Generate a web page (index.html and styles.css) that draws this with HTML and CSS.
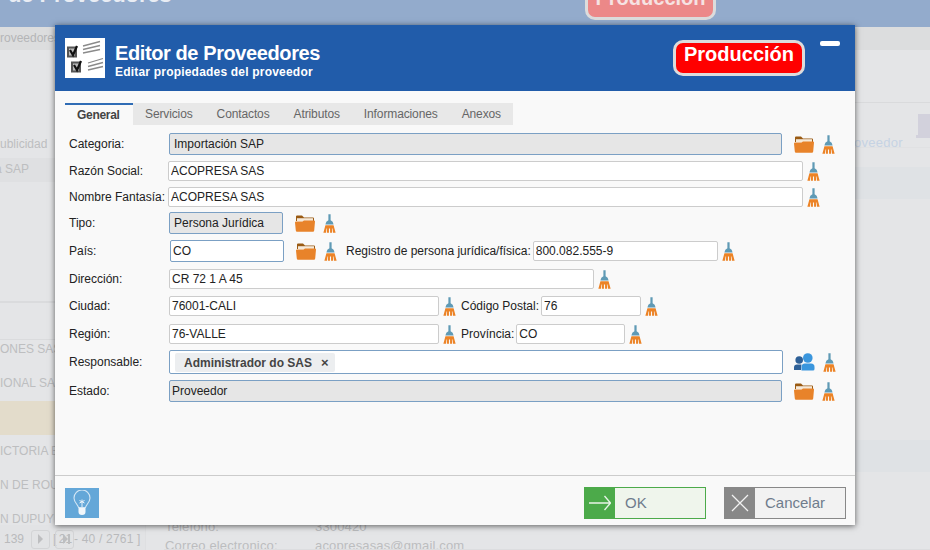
FILE: index.html
```html
<!DOCTYPE html>
<html lang="en">

<head>
    <meta charset="UTF-8">
    <meta name="viewport" content="width=device-width, initial-scale=1.0">
    <title>Editor de Proveedores</title>
    <link rel="stylesheet" href="styles.css">
</head>

<body>
    <svg class="defs" width="0" height="0">
        <symbol id="folder" viewBox="0 0 20 17">
            <path fill="#9a5a12" d="M1 6V1.5Q1 .5 2 .5H7L9 2.5H18Q19 2.5 19 3.500V6H18V3.500H2V6Z" />
            <path fill="#f6e9d8" d="M2 3.500H18V6H2Z" />
            <path fill="#e8832a" d="M0 7.500Q0 6.500 1 6.500H7.500L9 5.500H19Q20 5.500 20 6.500L19.200 15.500Q19 16.800 18 16.800H2Q1 16.800 .8 15.500Z" />
        </symbol>
        <symbol id="broom" viewBox="0 0 14 20">
            <path fill="#5f9ab5" d="M5.800 0H8.200V6.500Q11 7.500 11.400 11H2.600Q3 7.500 5.800 6.500Z" />
            <path fill="#ec8326" d="M2.600 11.800H11.400L13.600 20H10.800L10.200 15.500H9.600L9.800 20H7.600V15.500H6.400V20H4.200L4.400 15.500H3.800L3.200 20H.4Z" />
        </symbol>
        <symbol id="people" viewBox="0 0 21 18">
            <circle cx="5.200" cy="7" r="3.800" fill="#2e6097" />
            <path fill="#2e6097" d="M0 17V14.500Q0 11.500 3 11.500H7.500Q7 14 7 17Z" />
            <circle cx="13.800" cy="5" r="4.800" fill="#3a96dd" />
            <path fill="#3a96dd" d="M7.500 17.500V14Q7.500 10.500 11 10.500H17Q20.500 10.500 20.500 14V16Q20.500 17.500 19 17.500Z" />
        </symbol>
    </svg>

    <div class="backdrop">
        <div class="topbar">
            <div class="top-title">de Proveedores</div>
            <div class="top-badge">Producción</div>
        </div>
        <div class="crumb">roveedores</div>
        <div class="main">
            <div class="side">
                <div class="side-top">
                    <div class="side-row">ublicidad</div>
                    <div class="side-row side-sel">a SAP</div>
                </div>
                <div class="side-head"></div>
                <div class="side-list">
                    <div class="list-row list-first">ONES SAS</div>
                    <div class="list-row">IONAL SA</div>
                    <div class="list-row list-tan"></div>
                    <div class="list-row">ICTORIA E</div>
                    <div class="list-row">N DE ROU</div>
                    <div class="list-row">N DUPUY</div>
                </div>
                <div class="pager">
                    <span class="pager-num">139</span>
                    <span class="pager-btn"><i class="tri"></i></span>
                    <span class="pager-bracket">[</span>
                    <span class="pager-btn pager-last">21<i class="tri tri-over"></i><i class="tri-bar"></i></span>
                    <span class="pager-range">- 40 / 2761 ]</span>
                </div>
            </div>
            <div class="detail">
                <div class="detail-head"></div>
                <div class="detail-tools">
                    <span class="tool-text">Proveedor</span>
                    <div class="laptop"><div class="laptop-screen"></div><div class="laptop-base"></div></div>
                </div>
                <div class="band band-one"></div>
                <div class="band band-two"></div>
                <div class="contact">
                    <div class="contact-row"><span>Teléfono:</span><span>3300420</span></div>
                    <div class="contact-row"><span>Correo electronico:</span><span>acopresasas@gmail.com</span></div>
                </div>
                <div class="detail-strip"></div>
            </div>
        </div>
    </div>

    <div class="modal">
        <div class="modal-header">
            <svg class="logo" width="40" height="40" viewBox="0 0 40 40">
                <rect width="40" height="40" fill="#fff" />
                <g class="logo-art">
                    <rect x="3" y="9.500" width="8" height="9" fill="#bbb" stroke="#555" stroke-width="2" />
                    <path d="M5 12l3 5 4-9" fill="none" stroke="#111" stroke-width="2.200" />
                    <rect x="7" y="24.500" width="8" height="9" fill="#bbb" stroke="#555" stroke-width="2" />
                    <path d="M9 27l3 5 4-9" fill="none" stroke="#111" stroke-width="2.200" />
                    <path d="M18 8L35 3.500M18 11.500L35 7.500M18 15L35 11.500M23 25L38 20.500M23 28.500L38 24.500M23 32L38 28.500" stroke="#8a8a8a" stroke-width="1.300" />
                </g>
            </svg>
            <div class="modal-titles">
                <div class="modal-title">Editor de Proveedores</div>
                <div class="modal-subtitle">Editar propiedades del proveedor</div>
            </div>
            <div class="badge">Producción</div>
            <div class="minimize"></div>
        </div>

        <div class="modal-body">
            <div class="tabs">
                <div class="tab tab-active">General</div>
                <div class="tab">Servicios</div>
                <div class="tab">Contactos</div>
                <div class="tab">Atributos</div>
                <div class="tab">Informaciones</div>
                <div class="tab">Anexos</div>
            </div>

            <div class="form">
                <div class="row">
                    <label class="lbl">Categoria:</label>
                    <input class="inp select w-cat pad-5" value="Importación SAP" readonly>
                    <svg class="ico-folder after-select"><use href="#folder" /></svg>
                    <svg class="ico-broom"><use href="#broom" /></svg>
                </div>
                <div class="row">
                    <label class="lbl">Razón Social:</label>
                    <input class="inp shift-left w-name" value="ACOPRESA SAS">
                    <svg class="ico-broom near"><use href="#broom" /></svg>
                </div>
                <div class="row row-tight">
                    <label class="lbl">Nombre Fantasía:</label>
                    <input class="inp shift-left w-name" value="ACOPRESA SAS">
                    <svg class="ico-broom near"><use href="#broom" /></svg>
                </div>
                <div class="row">
                    <label class="lbl">Tipo:</label>
                    <input class="inp select w-tipo pad-5" value="Persona Jurídica" readonly>
                    <svg class="ico-folder after-select"><use href="#folder" /></svg>
                    <svg class="ico-broom"><use href="#broom" /></svg>
                </div>
                <div class="row row-wide">
                    <label class="lbl">País:</label>
                    <input class="inp open shift-right w-tipo" value="CO">
                    <svg class="ico-folder after-select"><use href="#folder" /></svg>
                    <svg class="ico-broom"><use href="#broom" /></svg>
                    <label class="lbl-inline lbl-reg">Registro de persona jurídica/física:</label>
                    <input class="inp short w-reg" value="800.082.555-9">
                    <svg class="ico-broom near"><use href="#broom" /></svg>
                </div>
                <div class="row row-wide">
                    <label class="lbl">Dirección:</label>
                    <input class="inp w-dir" value="CR 72 1 A 45">
                    <svg class="ico-broom near"><use href="#broom" /></svg>
                </div>
                <div class="row row-loose">
                    <label class="lbl">Ciudad:</label>
                    <input class="inp w-city" value="76001-CALI">
                    <svg class="ico-broom near"><use href="#broom" /></svg>
                    <label class="lbl-inline lbl-side">Código Postal:</label>
                    <input class="inp w-zip" value="76">
                    <svg class="ico-broom near"><use href="#broom" /></svg>
                </div>
                <div class="row">
                    <label class="lbl">Región:</label>
                    <input class="inp w-city" value="76-VALLE">
                    <svg class="ico-broom near"><use href="#broom" /></svg>
                    <label class="lbl-inline lbl-side">Província:</label>
                    <input class="inp w-prov" value="CO">
                    <svg class="ico-broom near"><use href="#broom" /></svg>
                </div>
                <div class="row">
                    <label class="lbl">Responsable:</label>
                    <div class="multi w-multi">
                        <span class="chip">Administrador do SAS<span class="chip-x">×</span></span>
                    </div>
                    <svg class="ico-people"><use href="#people" /></svg>
                    <svg class="ico-broom"><use href="#broom" /></svg>
                </div>
                <div class="row">
                    <label class="lbl">Estado:</label>
                    <input class="inp select w-cat" value="Proveedor" readonly>
                    <svg class="ico-folder after-select"><use href="#folder" /></svg>
                    <svg class="ico-broom"><use href="#broom" /></svg>
                </div>
            </div>
        </div>

        <div class="modal-footer">
            <div class="hint">
                <svg width="20" height="26" viewBox="0 0 20 26">
                    <path d="M6.500 17.500C6 14.500 2 12.500 2 8a8 8 0 0 1 16 0c0 4.500-4 6.500-4.500 9.500Z" fill="none" stroke="#d5e7f5" stroke-width="1.100" />
                    <path d="M7.500 10.500L12.500 13M12.500 10.500L7.500 13M10 9.500V17" fill="none" stroke="#e8f2fa" stroke-width="1" />
                    <path d="M6.500 18H13.500V22Q13.500 25 10 25Q6.500 25 6.500 22Z" fill="#f2f7fb" />
                </svg>
            </div>
            <div class="btn btn-ok">
                <span class="btn-icon">
                    <svg width="22" height="20" viewBox="0 0 22 20">
                        <path d="M0 10H21.500M15.500 3L21.500 10L15.500 17" fill="none" stroke="#e9f4e8" stroke-width="1.300" />
                    </svg>
                </span>
                <span class="btn-text">OK</span>
            </div>
            <div class="btn btn-cancel">
                <span class="btn-icon">
                    <svg width="18" height="18" viewBox="0 0 18 18">
                        <path d="M1 1L17 17M17 1L1 17" stroke="#f2f2f2" stroke-width="1.300" />
                    </svg>
                </span>
                <span class="btn-text">Cancelar</span>
            </div>
        </div>
    </div>
</body>

</html>
```

FILE: styles.css
```css
* {
    box-sizing: border-box;
}

body {
    margin: 0;
    width: 930px;
    height: 550px;
    overflow: hidden;
    font-family: "Liberation Sans", Arial, sans-serif;
    font-size: 12px;
    color: #222;
    background: #e4e5e7;
}

.defs {
    position: absolute;
}

/* faded page behind the dialog */
.backdrop {
    height: 550px;
    display: flex;
    flex-direction: column;
    overflow: hidden;
}

.topbar {
    height: 27px;
    flex: none;
    background: #93abcc;
    display: flex;
    align-items: flex-end;
    padding: 0 0 7px 8px;
}

.top-title {
    width: 577px;
    font-size: 22px;
    font-weight: bold;
    line-height: 26px;
    color: #e9edf4;
    margin-bottom: 12px;
    letter-spacing: -.1px;
}

.top-badge {
    width: 131px;
    height: 36px;
    flex: none;
    border: 3px solid #dcdcdc;
    border-radius: 10px;
    background: #ec8888;
    color: #f6e3e3;
    font-size: 20px;
    font-weight: bold;
    text-align: center;
    line-height: 22px;
}

.crumb {
    height: 23px;
    flex: none;
    background: #dcddde;
    color: #b4b5b7;
    line-height: 22px;
}

.main {
    flex: 1;
    display: flex;
    min-height: 0;
}

.side {
    width: 145px;
    flex: none;
    display: flex;
    flex-direction: column;
    color: #bdbec0;
    font-size: 12px;
}

.side-top {
    height: 253px;
    padding-top: 82px;
    border-bottom: 2px solid #dadbdd;
}

.side-row {
    height: 25px;
    line-height: 24px;
}

.side-sel {
    height: 24px;
    margin-top: 1px;
    background: #dfe0e2;
    line-height: 23px;
    text-indent: -5px;
}

.side-head {
    height: 37px;
    flex: none;
    border-bottom: 1px solid #dadbdd;
}

.side-list {
    flex: 1;
    overflow: hidden;
}

.list-row {
    height: 34px;
    line-height: 33px;
}

.list-first {
    height: 27px;
    line-height: 18px;
}

.list-tan {
    background: #e3dccb;
}

.pager {
    height: 25px;
    flex: none;
    display: flex;
    align-items: center;
    padding: 3px 0 0 4px;
    background: #e2e3e5;
    font-size: 12px;
    color: #b9babc;
}

.pager-num {
    width: 27px;
}

.pager-btn {
    width: 19px;
    height: 19px;
    flex: none;
    border: 1px solid #d3d4d6;
    border-radius: 3px;
    display: flex;
    align-items: center;
    justify-content: center;
}

.pager-bracket {
    width: 5px;
    margin-left: 3px;
}

.pager-last {
    margin-left: -3px;
}

.tri {
    width: 0;
    height: 0;
    border-left: 5px solid #bdbec0;
    border-top: 5px solid transparent;
    border-bottom: 5px solid transparent;
}

.tri-over {
    margin-left: -9px;
}

.tri-bar {
    width: 2px;
    height: 10px;
    background: #bdbec0;
}

.pager-range {
    margin-left: 0;
    letter-spacing: .2px;
}

.detail {
    flex: 1;
    background: #e4e5e7;
    color: #bcbdbf;
    font-size: 13px;
    border-left: 1px solid #dedfe1;
}

.detail-head {
    height: 53px;
    border-bottom: 1px solid #d9dadc;
}

.detail-tools {
    height: 45px;
    display: flex;
    justify-content: flex-end;
    align-items: flex-start;
    padding-top: 11px;
    overflow: hidden;
    border-bottom: 1px solid #e0e1e3;
}

.tool-text {
    margin: 21px 14px 0 0;
    font-size: 13px;
    color: #c6d3e4;
    letter-spacing: .3px;
}

.laptop {
    width: 13px;
    flex: none;
}

.laptop-screen {
    width: 24px;
    height: 21px;
    margin-left: 1px;
    background: #d2d1dc;
}

.laptop-base {
    width: 26px;
    height: 3px;
    margin-left: -1px;
    background: #d2d1dc;
}

.band {
    height: 32px;
    background: #dfe2e5;
}

.band-one {
    margin-top: 19px;
}

.band-two {
    margin-top: 241px;
}

.contact {
    height: 32px;
    margin-top: 45px;
    padding-left: 19px;
    overflow: hidden;
}

.contact-row {
    display: flex;
    height: 19px;
    line-height: 19px;
    letter-spacing: .15px;
}

.contact-row span:first-child {
    width: 150px;
}

.detail-strip {
    height: 3px;
    margin-left: 18px;
    background: #dcdddf;
}

/* dialog */
.modal {
    position: absolute;
    left: 55px;
    top: 25px;
    width: 800px;
    height: 500px;
    display: flex;
    flex-direction: column;
    background: #f9f9f9;
    box-shadow: 0 1px 6px rgba(0, 0, 0, .6);
}

.modal-header {
    height: 66px;
    flex: none;
    display: flex;
    background: #215caa;
    color: #fff;
    padding: 13px 15px 0 10px;
}

.logo {
    flex: none;
}

.logo-art {
    filter: blur(.7px);
}

.modal-titles {
    width: 558px;
    margin-left: 10px;
}

.modal-title {
    font-size: 20px;
    font-weight: bold;
    line-height: 23px;
    margin-top: 4px;
    letter-spacing: -.4px;
}

.modal-subtitle {
    font-size: 12px;
    font-weight: bold;
    line-height: 14px;
    letter-spacing: .2px;
}

.badge {
    width: 132px;
    height: 36px;
    flex: none;
    margin-top: 2px;
    border: 3px solid #dcdcdc;
    border-radius: 10px;
    background: #f00;
    font-size: 20px;
    font-weight: bold;
    text-align: center;
    line-height: 22px;
}

.minimize {
    width: 20px;
    height: 5px;
    margin: 3px 0 0 15px;
    border-radius: 2px;
    background: #fff;
}

.modal-body {
    flex: 1;
    padding: 12px 10px 0;
}

.tabs {
    display: flex;
    width: 448px;
    height: 22px;
    background: #e8e8e8;
    color: #666;
    letter-spacing: -.12px;
}

.tab {
    padding: 0 12px;
    line-height: 22px;
}

.tab-active {
    width: 68px;
    flex: none;
    background: #f9f9f9;
    border-top: 2px solid #2f6cb5;
    font-weight: bold;
    line-height: 20px;
    color: #444;
    letter-spacing: -.3px;
}

.form {
    padding: 8px 0 0 4px;
}

.row {
    display: flex;
    align-items: center;
    margin-bottom: 6px;
}

.row-tight {
    margin-bottom: 5px;
}

.row-wide {
    margin-bottom: 7px;
}

.row-loose {
    margin-bottom: 8px;
}

.lbl {
    width: 100px;
    flex: none;
}

.lbl-inline {
    flex: none;
}

.lbl-reg {
    margin: 0 2px 0 9px;
}

.lbl-side {
    margin: 0 2px 0 5px;
}

.inp {
    height: 20px;
    flex: none;
    padding: 0 2px;
    border: 1px solid #ccc;
    border-radius: 2px;
    background: #fff;
    color: #222;
    font: 12px "Liberation Sans", Arial, sans-serif;
    outline: none;
}

.select {
    height: 22px;
    background: #e6e6e6;
    border-color: #7ba0c4;
}

.open {
    height: 22px;
    border-color: #7ba0c4;
}

.short {
    height: 20px;
}

.pad-5 {
    padding-left: 4px;
}

.shift-left {
    margin-left: -1px;
}

.shift-right {
    margin-left: 1px;
}

.w-cat {
    width: 613px;
}

.w-multi {
    width: 614px;
}

.w-name {
    width: 635px;
}

.w-tipo {
    width: 114px;
}

.w-reg {
    width: 185px;
}

.w-dir {
    width: 425px;
}

.w-city {
    width: 270px;
}

.w-zip {
    width: 100px;
}

.w-prov {
    width: 109px;
}

.multi {
    height: 24px;
    flex: none;
    padding: 2px 5px;
    border: 1px solid #7ba0c4;
    border-radius: 2px;
    background: #fff;
}

.chip {
    display: inline-flex;
    align-items: center;
    width: 160px;
    height: 19px;
    padding-left: 9px;
    border-radius: 2px;
    background: #eceef0;
    color: #444;
    font-weight: bold;
}

.chip-x {
    margin-left: 9px;
    font-size: 13px;
}

.ico-folder {
    width: 20px;
    height: 17px;
    flex: none;
}

.after-select {
    margin-left: 12px;
}

.ico-broom {
    width: 13px;
    height: 19px;
    flex: none;
    margin-left: 8px;
}

.ico-broom.near {
    margin-left: 4px;
}

.ico-people {
    width: 21px;
    height: 18px;
    flex: none;
    margin-left: 11px;
}

.modal-footer {
    height: 50px;
    flex: none;
    display: flex;
    align-items: flex-start;
    padding: 11px 9px 0 10px;
    border-top: 1px solid #ccc;
}

.hint {
    width: 34px;
    height: 30px;
    flex: none;
    margin: 1px 485px 0 0;
    background: #64a7d8;
    display: flex;
    align-items: center;
    justify-content: center;
}

.btn {
    width: 122px;
    height: 32px;
    flex: none;
    display: flex;
    border: 1px solid;
    font-size: 15px;
    color: #6f7c8c;
}

.btn-icon {
    width: 31px;
    flex: none;
    margin: -1px 0 -1px -1px;
    display: flex;
    align-items: center;
    justify-content: center;
}

.btn-text {
    padding-left: 10px;
    line-height: 30px;
}

.btn-ok {
    border-color: #4caa4a;
    background: #eff5ec;
}

.btn-ok .btn-icon {
    background: #4caa4a;
}

.btn-cancel {
    margin-left: 18px;
    border-color: #888;
    background: #f2f2f2;
}

.btn-cancel .btn-icon {
    background: #888;
}
```
